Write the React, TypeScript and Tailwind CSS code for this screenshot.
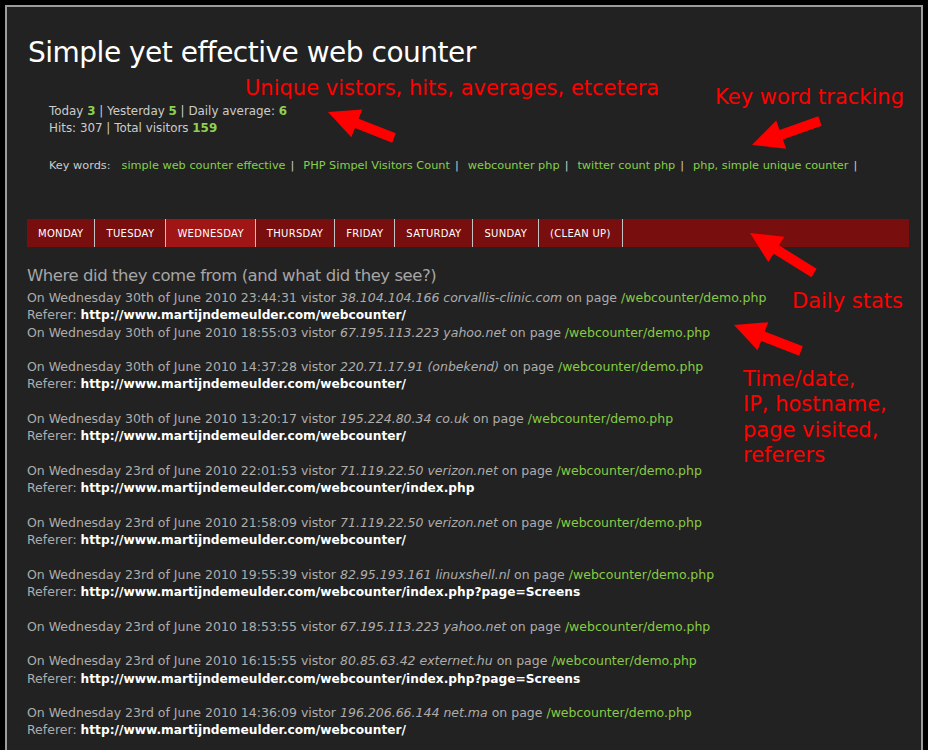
import React from 'react'

// ── data ──────────────────────────────────────────────────────────────────────
const DAYS = ['Monday', 'Tuesday', 'Wednesday', 'Thursday', 'Friday', 'Saturday', 'Sunday', '(Clean up)']

const KEYWORDS = [
  'simple web counter effective',
  'PHP Simpel Visitors Count',
  'webcounter php',
  'twitter count php',
  'php, simple unique counter',
]

const BASE = 'http://www.martijndemeulder.com/webcounter/'

const VISITS = [
  { day: '30th', time: '23:44:31', host: '38.104.104.166 corvallis-clinic.com', ref: BASE },
  { day: '30th', time: '18:55:03', host: '67.195.113.223 yahoo.net', ref: '' },
  { day: '30th', time: '14:37:28', host: '220.71.17.91 (onbekend)', ref: BASE },
  { day: '30th', time: '13:20:17', host: '195.224.80.34 co.uk', ref: BASE },
  { day: '23rd', time: '22:01:53', host: '71.119.22.50 verizon.net', ref: BASE + 'index.php' },
  { day: '23rd', time: '21:58:09', host: '71.119.22.50 verizon.net', ref: BASE },
  { day: '23rd', time: '19:55:39', host: '82.95.193.161 linuxshell.nl', ref: BASE + 'index.php?page=Screens' },
  { day: '23rd', time: '18:53:55', host: '67.195.113.223 yahoo.net', ref: '' },
  { day: '23rd', time: '16:15:55', host: '80.85.63.42 externet.hu', ref: BASE + 'index.php?page=Screens' },
  { day: '23rd', time: '14:36:09', host: '196.206.66.144 net.ma', ref: BASE },
]

// ── annotation arrows ─────────────────────────────────────────────────────────
function arrowPoints(x1: number, y1: number, x2: number, y2: number, head = 31, half = 15, shaft = 5): string {
  const len = Math.hypot(x2 - x1, y2 - y1)
  const ux = (x2 - x1) / len
  const uy = (y2 - y1) / len
  const nx = -uy
  const ny = ux
  const bx = x2 - ux * head
  const by = y2 - uy * head
  const pts = [
    [x1 + nx * shaft, y1 + ny * shaft],
    [bx + nx * shaft, by + ny * shaft],
    [bx + nx * half, by + ny * half],
    [x2, y2],
    [bx - nx * half, by - ny * half],
    [bx - nx * shaft, by - ny * shaft],
    [x1 - nx * shaft, y1 - ny * shaft],
  ]
  return pts.map(p => `${p[0].toFixed(1)},${p[1].toFixed(1)}`).join(' ')
}

const ARROWS = [
  [394, 138, 328, 112],
  [820, 121, 752, 145],
  [814, 273, 750, 233],
  [801, 351, 734, 325],
]

function Annotations(): React.ReactElement {
  return (
    <>
      <svg className="absolute left-0 top-0 pointer-events-none" width="928" height="750">
        {ARROWS.map((a, i) => (
          <polygon key={i} points={arrowPoints(a[0], a[1], a[2], a[3])} fill="#ff0000" />
        ))}
      </svg>
      <div className="absolute left-[245px] top-[74px] text-[21px] leading-[28px] text-[#ff0000]">Unique vistors, hits, averages, etcetera</div>
      <div className="absolute left-[715px] top-[83px] text-[21px] leading-[28px] text-[#ff0000]">Key word tracking</div>
      <div className="absolute left-[792px] top-[287px] text-[21px] leading-[28px] text-[#ff0000]">Daily stats</div>
      <div className="absolute left-[743px] top-[367px] text-[21px] leading-[25.3px] text-[#ff0000]">
        Time/date,<br />IP, hostname,<br />page visited,<br />referers
      </div>
    </>
  )
}

// ── page ──────────────────────────────────────────────────────────────────────
export default function App(): React.ReactElement {
  return (
    <div className="relative h-[750px] overflow-hidden bg-black font-['DejaVu_Sans',sans-serif]">
      <div className="mx-[5px] mt-[5px] border-2 border-[#9c9c9c] bg-[#222222] pl-[20px] pr-[12px] pt-[28px] pb-[60px]">
        <h1 className="pl-[1px] text-[28px] leading-[36px] tracking-[-0.5px] text-white">Simple yet effective web counter</h1>

        {/* counters */}
        <div className="ml-[22px] mt-[32px] text-[11.9px] leading-[17px] text-[#cccccc]">
          <div>
            Today <b className="text-[#8fd14f]">3</b> | Yesterday <b className="text-[#8fd14f]">5</b> | Daily average: <b className="text-[#8fd14f]">6</b>
          </div>
          <div>
            Hits: 307 | Total visitors <b className="text-[#8fd14f]">159</b>
          </div>
        </div>

        {/* key words */}
        <div className="ml-[22px] mt-[20px] flex text-[11.3px] leading-[17px] text-[#cccccc]">
          <span className="mr-[11px]">Key words:</span>
          {KEYWORDS.map(k => (
            <span key={k} className="flex">
              <span className="text-[#86d04a]">{k}</span>
              <span className="ml-[5px] mr-[9px]">|</span>
            </span>
          ))}
        </div>

        {/* day tabs */}
        <div className="mt-[45px] flex h-[28px] bg-[#790e0e]">
          {DAYS.map(d => (
            <div
              key={d}
              className={
                'flex items-center border-r border-[#c4c4c4] px-[11px] text-[10px] uppercase tracking-[0.3px] text-white ' +
                (d === 'Wednesday' ? 'bg-[#a01515]' : '')
              }
            >
              {d}
            </div>
          ))}
        </div>

        <h2 className="mt-[18px] text-[16.5px] leading-[22px] tracking-[-0.45px] text-[#a6a6a6]">
          Where did they come from (and what did they see?)
        </h2>

        {/* visit log */}
        <div className="mt-[2px] text-[12.5px] leading-[17.3px] text-[#adadad]">
          {VISITS.map((v, i) => (
            <div key={i} className={i === 0 ? '' : 'mb-[17.3px]'}>
              <div className="h-[17.3px] whitespace-nowrap">
                On Wednesday {v.day} of June 2010 {v.time} vistor <i>{v.host}</i> on page{' '}
                <span className="text-[#86cc44]">/webcounter/demo.php</span>
              </div>
              {v.ref && (
                <div className="h-[17.3px] whitespace-nowrap">
                  Referer: <b className="text-[12.2px] text-white">{v.ref}</b>
                </div>
              )}
            </div>
          ))}
        </div>
      </div>

      <Annotations />
    </div>
  )
}
